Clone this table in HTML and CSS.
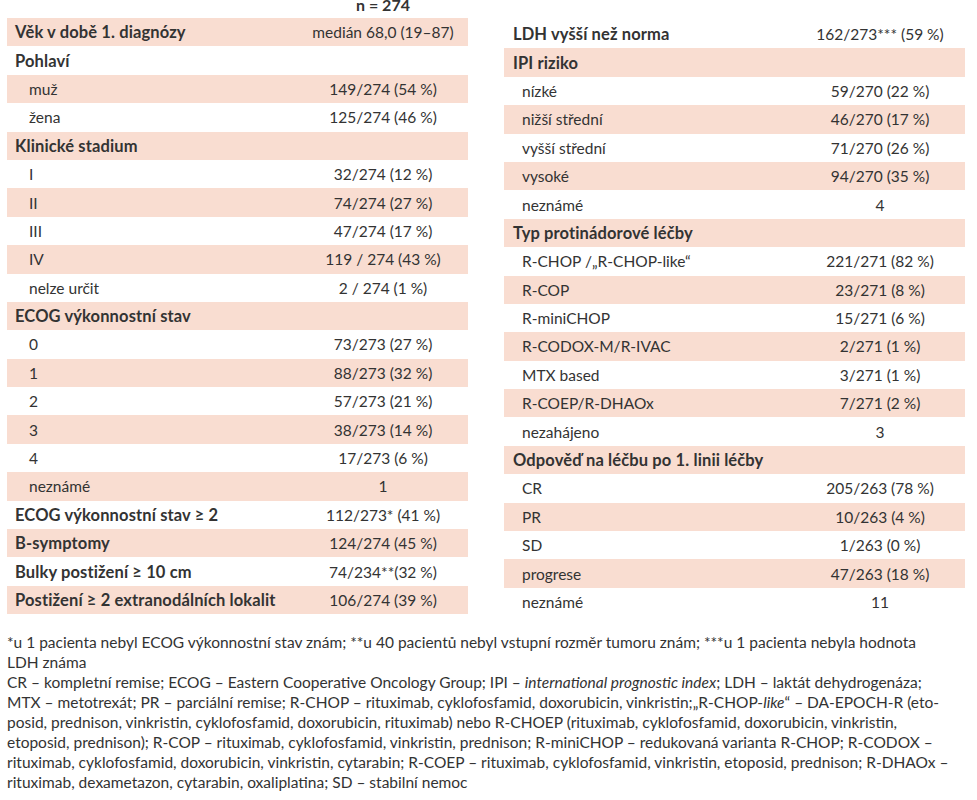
FILE: index.html
```html
<!DOCTYPE html>
<html lang="cs">
<head>
<meta charset="utf-8">
<link rel="stylesheet" href="styles.css">
</head>
<body>
<div class="page">
  <div class="tables">
    <div class="table table-left">
      <div class="row head"><span class="label"></span><span class="value">n = 274</span></div>
      <div class="row pink cat"><span class="label">Věk v době 1. diagnózy</span><span class="value">medián 68,0 (19–87)</span></div>
      <div class="row cat"><span class="label">Pohlaví</span><span class="value"></span></div>
      <div class="row pink sub"><span class="label">muž</span><span class="value">149/274 (54 %)</span></div>
      <div class="row sub"><span class="label">žena</span><span class="value">125/274 (46 %)</span></div>
      <div class="row pink cat"><span class="label">Klinické stadium</span><span class="value"></span></div>
      <div class="row sub"><span class="label">I</span><span class="value">32/274 (12 %)</span></div>
      <div class="row pink sub"><span class="label">II</span><span class="value">74/274 (27 %)</span></div>
      <div class="row sub"><span class="label">III</span><span class="value">47/274 (17 %)</span></div>
      <div class="row pink sub"><span class="label">IV</span><span class="value">119 / 274 (43 %)</span></div>
      <div class="row sub"><span class="label">nelze určit</span><span class="value">2 / 274 (1 %)</span></div>
      <div class="row pink cat"><span class="label">ECOG výkonnostní stav</span><span class="value"></span></div>
      <div class="row sub"><span class="label">0</span><span class="value">73/273 (27 %)</span></div>
      <div class="row pink sub"><span class="label">1</span><span class="value">88/273 (32 %)</span></div>
      <div class="row sub"><span class="label">2</span><span class="value">57/273 (21 %)</span></div>
      <div class="row pink sub"><span class="label">3</span><span class="value">38/273 (14 %)</span></div>
      <div class="row sub"><span class="label">4</span><span class="value">17/273 (6 %)</span></div>
      <div class="row pink sub"><span class="label">neznámé</span><span class="value">1</span></div>
      <div class="row cat"><span class="label">ECOG výkonnostní stav ≥ 2</span><span class="value">112/273* (41 %)</span></div>
      <div class="row pink cat"><span class="label">B-symptomy</span><span class="value">124/274 (45 %)</span></div>
      <div class="row cat"><span class="label">Bulky postižení ≥ 10 cm</span><span class="value">74/234**(32 %)</span></div>
      <div class="row pink cat"><span class="label">Postižení ≥ 2 extranodálních lokalit</span><span class="value">106/274 (39 %)</span></div>
    </div>
    <div class="table table-right">
      <div class="row cat"><span class="label">LDH vyšší než norma</span><span class="value">162/273*** (59 %)</span></div>
      <div class="row pink cat"><span class="label">IPI riziko</span><span class="value"></span></div>
      <div class="row sub"><span class="label">nízké</span><span class="value">59/270 (22 %)</span></div>
      <div class="row pink sub"><span class="label">nižší střední</span><span class="value">46/270 (17 %)</span></div>
      <div class="row sub"><span class="label">vyšší střední</span><span class="value">71/270 (26 %)</span></div>
      <div class="row pink sub"><span class="label">vysoké</span><span class="value">94/270 (35 %)</span></div>
      <div class="row sub"><span class="label">neznámé</span><span class="value">4</span></div>
      <div class="row pink cat"><span class="label">Typ protinádorové léčby</span><span class="value"></span></div>
      <div class="row sub"><span class="label">R-CHOP /„R-CHOP-like“</span><span class="value">221/271 (82 %)</span></div>
      <div class="row pink sub"><span class="label">R-COP</span><span class="value">23/271 (8 %)</span></div>
      <div class="row sub"><span class="label">R-miniCHOP</span><span class="value">15/271 (6 %)</span></div>
      <div class="row pink sub"><span class="label">R-CODOX-M/R-IVAC</span><span class="value">2/271 (1 %)</span></div>
      <div class="row sub"><span class="label">MTX based</span><span class="value">3/271 (1 %)</span></div>
      <div class="row pink sub"><span class="label">R-COEP/R-DHAOx</span><span class="value">7/271 (2 %)</span></div>
      <div class="row sub"><span class="label">nezahájeno</span><span class="value">3</span></div>
      <div class="row pink cat"><span class="label">Odpověď na léčbu po 1. linii léčby</span><span class="value"></span></div>
      <div class="row sub"><span class="label">CR</span><span class="value">205/263 (78 %)</span></div>
      <div class="row pink sub"><span class="label">PR</span><span class="value">10/263 (4 %)</span></div>
      <div class="row sub"><span class="label">SD</span><span class="value">1/263 (0 %)</span></div>
      <div class="row pink sub"><span class="label">progrese</span><span class="value">47/263 (18 %)</span></div>
      <div class="row sub"><span class="label">neznámé</span><span class="value">11</span></div>
    </div>
  </div>
  <div class="notes">
    <p>*u 1 pacienta nebyl ECOG výkonnostní stav znám; **u 40 pacientů nebyl vstupní rozměr tumoru znám; ***u 1 pacienta nebyla hodnota<br>LDH známa</p>
    <p>CR – kompletní remise; ECOG – Eastern Cooperative Oncology Group; IPI – <em>international prognostic index</em>; LDH – laktát dehydrogenáza;<br>MTX – metotrexát; PR – parciální remise; R-CHOP – rituximab, cyklofosfamid, doxorubicin, vinkristin;„R-CHOP-<em>like</em>“ – DA-EPOCH-R (eto-<br>posid, prednison, vinkristin, cyklofosfamid, doxorubicin, rituximab) nebo R-CHOEP (rituximab, cyklofosfamid, doxorubicin, vinkristin,<br>etoposid, prednison); R-COP – rituximab, cyklofosfamid, vinkristin, prednison; R-miniCHOP – redukovaná varianta R-CHOP; R-CODOX –<br>rituximab, cyklofosfamid, doxorubicin, vinkristin, cytarabin; R-COEP – rituximab, cyklofosfamid, vinkristin, etoposid, prednison; R-DHAOx –<br>rituximab, dexametazon, cytarabin, oxaliplatina; SD – stabilní nemoc</p>
  </div>
</div>
</body>
</html>
```

FILE: styles.css
```css
html, body {
  margin: 0;
  padding: 0;
  background: #ffffff;
}
body {
  font-family: Lato, "Liberation Sans", sans-serif;
  color: #333333;
  overflow: hidden;
}
.page {
  padding: 0 7px;
  width: 963px;
}
.tables {
  display: grid;
  grid-template-columns: 461px 461px;
  column-gap: 36px;
  margin-top: -10px;
  font-size: 15.5px;
}
.table-right {
  padding-top: 30px;
}
.row {
  display: grid;
  grid-template-columns: 1fr 170px;
  align-items: center;
  height: 28.4px;
}
.row.pink {
  background: #f9ddd1;
}
.row .value {
  text-align: center;
  white-space: nowrap;
}
.row.cat .label {
  font-weight: 700;
  font-size: 16.5px;
  letter-spacing: 0.12px;
  padding-left: 8px;
  white-space: nowrap;
}
.table-right .row.cat .label {
  padding-left: 9px;
}
.row.sub .label {
  padding-left: 22px;
}
.table-right .row.sub .label {
  padding-left: 18px;
}
.row.head {
  height: 28px;
  font-weight: 700;
  font-size: 16px;
}
.notes {
  margin-top: 16px;
  font-size: 15.5px;
  line-height: 20px;
  white-space: nowrap;
}
.notes p {
  margin: 0;
}
.notes em {
  font-style: italic;
}
```
